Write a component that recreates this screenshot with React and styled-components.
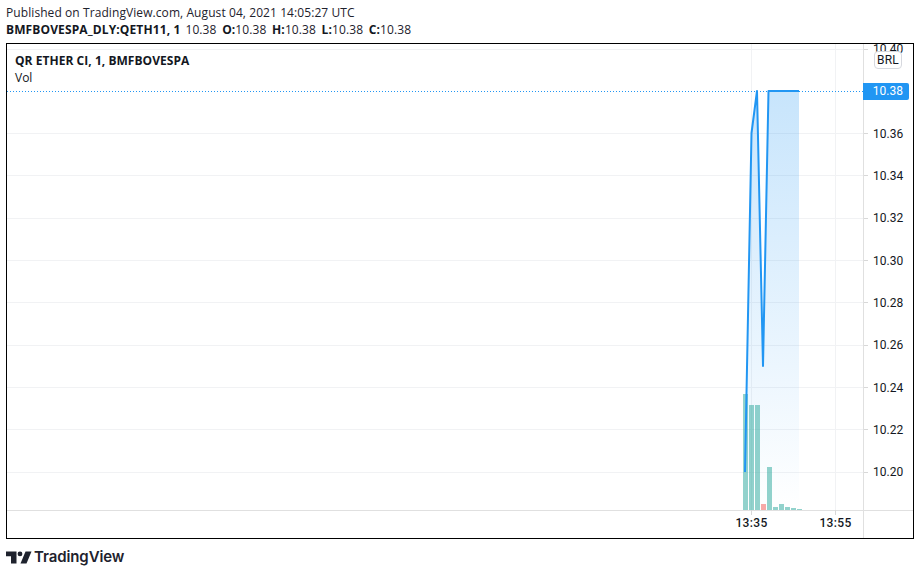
import React from "react";
import styled, { createGlobalStyle } from "styled-components";

const Global = createGlobalStyle`
  html, body { margin: 0; padding: 0; background: #fff; }
  body { width: 920px; height: 575px; overflow: hidden; font-family: "Open Sans", "Noto Sans", sans-serif; }
`;
const Page = styled.div`
  width: 920px; height: 575px; display: flex; flex-direction: column; padding: 4px 6px 0; box-sizing: border-box; color: #131722;
`;
const Caption = styled.div`
  font-size: 12px; line-height: 17px; height: 18px; white-space: nowrap; color: #1e222d; letter-spacing: 0.08px;
`;
const Info = styled(Caption)`
  height: 16px; line-height: 16px; letter-spacing: 0.1px; word-spacing: 2.4px; display: flex;
  b { font-weight: 700; color: #131722; word-spacing: 0; }
`;
const Symbol = styled.b`
  margin-right: 5px; letter-spacing: 0.12px;
`;
const Frame = styled.div`
  position: relative; margin-top: 5px; width: 908px; height: 496px; box-sizing: border-box; border: 1px solid #000; overflow: hidden;
`;
const Chart = styled.svg`
  display: block; width: 906px; height: 494px;
  text { font-family: "Roboto", "Open Sans", sans-serif; font-size: 12px; fill: #131722; }
`;
const TimeLabel = styled.text`
  font-weight: 500; letter-spacing: 0.35px;
`;
const Legend = styled.div`
  position: absolute; left: 8px; top: 8px; font-size: 12px; line-height: 17px; color: #131722;
  b { display: block; font-weight: 700; letter-spacing: 0.04px; }
`;
const Currency = styled.div`
  position: absolute; left: 867px; top: 7px; width: 28px; height: 18px; box-sizing: border-box; border: 1px solid #d6d8de; border-radius: 4px;
  background: #fff; font: 12px/16px "Roboto", sans-serif; letter-spacing: 0.2px; text-align: center; color: #131722;
`;
const PriceTag = styled.div`
  position: absolute; left: 856px; top: 39px; width: 46px; height: 17px; background: #2196f3; border-radius: 0 2px 2px 0;
  color: #fff; font: 12px/17px "Roboto", sans-serif; text-align: right; padding-right: 6px; box-sizing: border-box;
`;
const Brand = styled.div`
  display: flex; align-items: center; gap: 2px; margin-top: 10px; height: 16px;
`;
const BrandName = styled.span`
  font: 600 15px/16px "Inter", sans-serif; color: #1e222d; letter-spacing: -0.1px;
`;

// Offsets: svg origin is the inside of the frame at page (7,44)
const ox = 7, oy = 44;
const prices = [["10.40",48.5],["10.36",133],["10.34",175.3],["10.32",217.6],["10.30",260],["10.28",302.3],["10.26",344.6],["10.24",387],["10.22",429.3],["10.20",471.6]];
const volumes = [[743,394,"t"],[749,405,"t"],[755,405,"t"],[761,504,"r"],[767,467,"t"],[773,507,"t"],[779,504,"t"],[785,507,"t"],[791,508,"t"],[797,509,"t"]];
const line = [[745,472],[751.5,133],[757,91],[763,366],[768.5,91],[799,91]];
const pts = line.map(([x,y]) => `${x-ox},${y-oy}`).join(" ");
const area = `${745-ox},${510-oy} ${pts} ${799-ox},${510-oy}`;

function PriceChart() {
  return (
    <Chart viewBox="0 0 906 494">
      <defs>
        <linearGradient id="fill" x1="0" y1="0" x2="0" y2="1">
          <stop offset="0" stopColor="#2196f3" stopOpacity="0.25" />
          <stop offset="1" stopColor="#2196f3" stopOpacity="0" />
        </linearGradient>
      </defs>
      {prices.map(([p,y]) => {
        const gy = Math.round(y) - oy + 0.5;
        return (
          <g key={p}>
            <line x1="0" x2={863-ox} y1={gy} y2={gy} stroke="#f1f2f4" />
            <line x1={863-ox} x2={868-ox} y1={gy} y2={gy} stroke="#d8d8d8" />
            <text x={873-ox} y={y-oy+4.5}>{p}</text>
          </g>
        );
      })}
      {[751,835].map(x => <line key={x} x1={x-ox+0.5} x2={x-ox+0.5} y1="0" y2={510-oy} stroke="#f1f2f4" />)}
      <polygon points={area} fill="url(#fill)" />
      {volumes.map(([x,y,k]) => (
        <rect key={x} x={x-ox} y={y-oy} width="5" height={510-y} fill={k==="t" ? "#26a69a" : "#ef5350"} fillOpacity="0.5" />
      ))}
      <polyline points={pts} fill="none" stroke="#2196f3" strokeWidth="2" strokeLinejoin="round" />
      <line x1="0" x2={863-ox} y1={91.5-oy} y2={91.5-oy} stroke="#2196f3" strokeDasharray="1 2" />
      <line x1={863-ox+0.5} x2={863-ox+0.5} y1="0" y2="494" stroke="#e0e0e0" />
      <line x1="0" x2="906" y1={510-oy+0.5} y2={510-oy+0.5} stroke="#e0e0e0" />
      {[751,835].map(x => <line key={x} x1={x-ox+0.5} x2={x-ox+0.5} y1={510-oy} y2={515-oy} stroke="#d8d8d8" />)}
      <TimeLabel x={751.5-ox} y={527-oy} textAnchor="middle">13:35</TimeLabel>
      <TimeLabel x={835.5-ox} y={527-oy} textAnchor="middle">13:55</TimeLabel>
    </Chart>
  );
}

function Logo() {
  return (
    <svg width="26" height="13" viewBox="0 0 26 13">
      <path d="M0 0.5H10.5V12.5H5V5.3H0Z" fill="#1e222d" />
      <circle cx="14" cy="2.9" r="2.4" fill="#1e222d" />
      <path d="M19.5 0.5H25.5L20.5 12.5H14.5Z" fill="#1e222d" />
    </svg>
  );
}

export default function App() {
  return (
    <Page>
      <Global />
      <Caption>Published on TradingView.com, August 04, 2021 14:05:27 UTC</Caption>
      <Info>
        <Symbol>BMFBOVESPA_DLY:QETH11, 1</Symbol>
        <span>10.38 <b>O:</b>10.38 <b>H:</b>10.38 <b>L:</b>10.38 <b>C:</b>10.38</span>
      </Info>
      <Frame>
        <PriceChart />
        <Legend><b>QR ETHER CI, 1, BMFBOVESPA</b>Vol</Legend>
        <Currency>BRL</Currency>
        <PriceTag>10.38</PriceTag>
      </Frame>
      <Brand><Logo /><BrandName>TradingView</BrandName></Brand>
    </Page>
  );
}
